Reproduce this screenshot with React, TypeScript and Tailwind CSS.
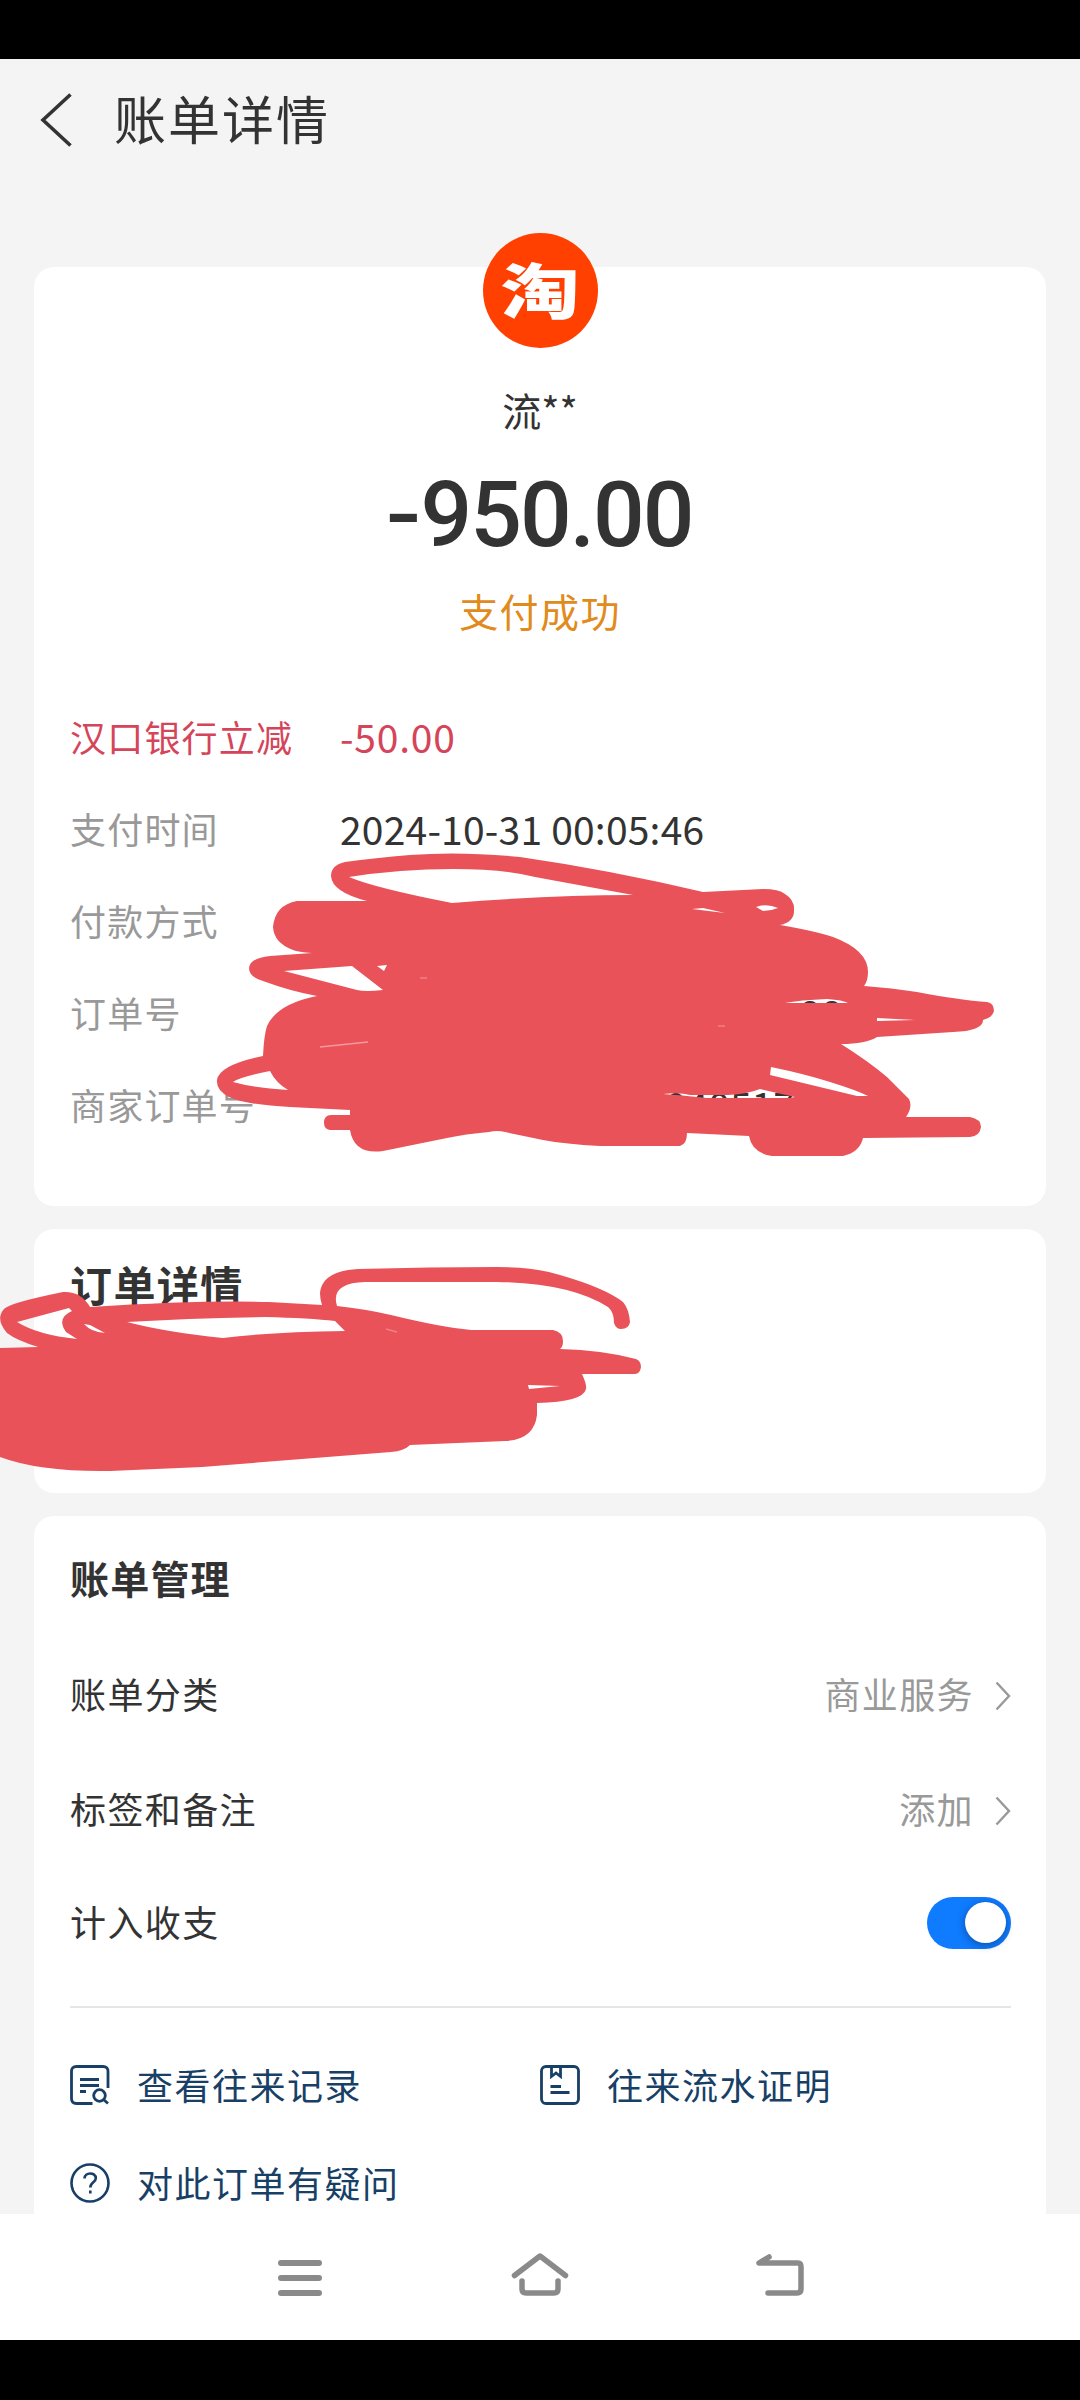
import type { ReactNode } from 'react'

interface DetailRow {
  label: string
  value?: ReactNode
  highlight?: boolean
}

const details: DetailRow[] = [
  { label: '汉口银行立减', value: <span className="tracking-[0.800px]">-50.00</span>, highlight: true },
  { label: '支付时间', value: <span className="tracking-[0.200px]">2024-10-31 00:05:46</span> },
  { label: '付款方式' },
  { label: '订单号', value: <span className="ml-[459px]">88</span> },
  { label: '商家订单号', value: <span className="ml-[325px]">040517</span> },
]

function Chevron() {
  return (
    <svg className="translate-y-[3px]" width="16" height="30" viewBox="0 0 16 30" fill="none" stroke="#999" strokeWidth="2.4">
      <path d="M1.5 1.5 14 15 1.5 28.5" />
    </svg>
  )
}

function RecordIcon() {
  return (
    <svg width="40" height="40" viewBox="0 0 40 40" fill="none" stroke="currentColor" strokeWidth="2.8">
      <path d="M38 23V6.500Q38 1.500 33 1.500H6.500Q1.500 1.500 1.500 6.500V33.500Q1.500 38.500 6.500 38.500H22.500" />
      <path d="M10 14.500H29M10 20.500H29M10 26.500H16" />
      <circle cx="29.500" cy="30.500" r="5.800" />
      <path d="m33.500 34.500 4.500 4" />
    </svg>
  )
}

function ProofIcon() {
  return (
    <svg width="40" height="40" viewBox="0 0 40 40" fill="none" stroke="currentColor" strokeWidth="2.8">
      <rect x="1.500" y="1.500" width="37" height="37" rx="4.500" />
      <path d="M11.500 2V11.500L16 8 20.500 11.500V2" />
      <path d="M10.500 21.500H21M10.500 27.500H29.500" />
    </svg>
  )
}

function HelpIcon() {
  return (
    <svg width="40" height="40" viewBox="0 0 40 40" fill="none" stroke="currentColor" strokeWidth="2.600">
      <circle cx="20" cy="20" r="18.500" />
      <path d="M14.500 15.500C14.500 8.800 25.800 8.800 25.800 15.200C25.800 19.500 20.300 19 20.300 24.500" />
      <path d="M20.300 27.500V30.500" />
    </svg>
  )
}

function ManageRow({ label, children }: { label: string; children: ReactNode }) {
  return (
    <div className="flex items-center justify-between">
      <span className="tracking-[1.4px]">{label}</span>
      {children}
    </div>
  )
}

// Red marker strokes that hide the private fields
function Marker() {
  return (
    <svg className="pointer-events-none absolute inset-0" width="1080" height="2400" viewBox="0 0 1080 2400">
      <g fill="#e95259" fillRule="evenodd">
        <path
          d="M331 876Q331 865 345 862Q375 858 410 855Q460 851 520 857Q610 870 703 892L763 889Q779 889 785 894Q795 900 794 911Q794 922 780 925Q815 931 833 937Q868 950 868 972Q868 981 864 986Q892 988 917 992Q960 1000 987 1002Q994 1003 994 1011Q992 1018 983 1020Q983 1031 953 1032L877 1037Q866 1044 841 1044Q868 1061 887 1077Q902 1092 909 1099Q913 1107 906 1117H970Q981 1119 981 1127Q980 1136 970 1137L863 1138Q860 1152 843 1156H772Q752 1153 749 1136L687 1133Q687 1144 680 1146H600Q565 1144 543 1140L505 1132Q497 1130 489 1132Q465 1134 447 1138L383 1151Q354 1155 350 1130H330Q324 1129 324 1123Q324 1115 331 1115H350V1110L290 1107Q247 1105 229 1097Q216 1090 217 1080Q219 1065 263 1056Q264 1035 267 1026Q277 1004 317 996Q290 991 263 981Q249 977 249 968Q250 958 270 956L312 953Q298 952 293 950Q274 943 273 927Q275 905 297 901H367Q332 892 331 876Z
          M349 877Q400 869 453 869Q503 869 535 877L633 895Q550 895 452 903Q375 888 349 877Z
          M284 971 352 966 383 990Q365 992 357 990Z
          M377 966 387 965 384 971Z
          M233 1082Q240 1077 270 1071Q276 1083 288 1090Q254 1088 233 1082Z
          M756 907Q767 903 778 908Q771 911 763 911Z
          M771 1067Q805 1074 830 1082Q856 1090 868 1096H857L770 1075Z
          M663 1094Q680 1092 690 1095H728Q748 1094 760 1089L777 1093 795 1097 790 1098H707Q680 1095 663 1094Z
          M785 1003Q800 1000 827 999Q843 1000 848 1003Q815 1003 785 1003Z
          M877 1018 915 1020 877 1021Z
          M692 909 703 908 725 913Z"
        />
        <path
          d="M0 1348 38 1347Q16 1340 7 1333Q-5 1319 4 1309Q9 1303 63 1292Q81 1291 90 1307Q200 1300 269 1302L322 1305Q320 1299 320 1293Q322 1271 358 1269Q430 1267 497 1267Q535 1267 560 1275Q605 1288 623 1302Q629 1309 630 1322Q629 1329 621 1329Q616 1329 614 1323Q614 1312 608 1307Q570 1283 497 1282H365Q330 1283 337 1306Q365 1309 391 1315Q440 1327 471 1330H553Q563 1332 563 1341Q563 1347 560 1349Q602 1350 636 1359Q641 1361 641 1367Q640 1374 635 1374H582Q587 1385 586 1389Q583 1402 537 1403V1415Q534 1440 505 1441L410 1445Q404 1451 391 1452L202 1467L110 1471Q40 1472 0 1457Z
          M17 1322 69 1308 72 1311Q56 1318 66 1332L77 1339Q38 1335 17 1322Z
          M127 1322Q190 1318 265 1317Q310 1318 335 1321L345 1331Q270 1332 223 1338Q165 1332 127 1322Z
          M84 1324 90 1325 105 1333Q91 1332 84 1324Z
          M528 1385 560 1386 529 1389Z"
        />
      </g>
      <path d="M320 1047 368 1042" stroke="#f4999c" strokeWidth="1.500" />
      <path d="M420 978H427M718 1026H725M386 1329 397 1332" stroke="#f08086" strokeWidth="1.500" />
    </svg>
  )
}

export default function App() {
  return (
    <div className="relative flex h-[2400px] w-[1080px] flex-col overflow-hidden bg-black pt-[59px] font-['Noto_Sans_CJK_SC',sans-serif] text-[36px] leading-none text-[#333]">
      <div className="flex h-[2155px] shrink-0 flex-col bg-[#f4f4f4] px-[34px]">
        <header className="flex h-[122px] shrink-0 items-center pl-[6px]">
          <svg width="34" height="54" viewBox="0 0 34 54" fill="none" stroke="#333" strokeWidth="3.600">
            <path d="M30.500 1.500 3 27 30.500 52.500" />
          </svg>
          <h1 className="ml-[40px] -mt-[5px] text-[52px] tracking-[2px]">账单详情</h1>
        </header>

        <section className="mt-[86px] flex h-[939px] shrink-0 flex-col items-center rounded-[20px] bg-white">
          <div className="-mt-[34px] flex size-[115px] shrink-0 items-center justify-center rounded-full bg-[#ff4000]">
            <span className="block -translate-y-[3px] scale-x-[1.04] scale-y-[0.8] text-[76px] font-black text-white">淘</span>
          </div>
          <div className="mt-[41px] flex h-[40px] items-center text-[39px]">流**</div>
          <div className="mt-[36px] flex h-[100px] items-center font-['Roboto',sans-serif] text-[91px] font-medium tracking-[-2px]">
            <span className="mr-[4px] inline-block scale-x-[1.15] scale-y-[0.95]">-</span>
            <span>950.00</span>
          </div>
          <div className="mt-[25px] flex h-[40px] items-center text-[39px] tracking-[1.4px] text-[#e08b1b]">支付成功</div>
          <dl className="mt-[60px] w-full px-[36px]">
            {details.map((row) => (
              <div
                key={row.label}
                className={`flex h-[92px] items-center whitespace-nowrap ${row.highlight ? 'text-[#d5455a]' : ''}`}
              >
                <dt className={`w-[270px] tracking-[1.2px] ${row.highlight ? '' : 'text-[#999]'}`}>{row.label}</dt>
                <dd className="text-[39px]">{row.value}</dd>
              </div>
            ))}
          </dl>
        </section>

        <section className="mt-[23px] h-[264px] shrink-0 rounded-[20px] bg-white px-[36px] pt-[34px]">
          <h2 className="text-[42px] font-bold tracking-[1.4px]">订单详情</h2>
        </section>

        <section className="mt-[23px] flex grow flex-col rounded-t-[20px] bg-white pl-[36px] pr-[35px]">
          <h2 className="mt-[42px] text-[39px] font-bold tracking-[1.2px]">账单管理</h2>
          <div className="mt-[38px] grid grid-rows-[115px_115px_111px]">
            <ManageRow label="账单分类">
              <span className="flex items-center gap-[21px] tracking-[1.400px] text-[#999]">
                商业服务
                <Chevron />
              </span>
            </ManageRow>
            <ManageRow label="标签和备注">
              <span className="flex items-center gap-[21px] tracking-[1.400px] text-[#999]">
                添加
                <Chevron />
              </span>
            </ManageRow>
            <ManageRow label="计入收支">
              <span className="mt-[4px] flex h-[52px] w-[84px] items-center justify-end rounded-full bg-[#0f7bff] pr-[5px]">
                <span className="size-[41px] rounded-full bg-white shadow-[0_2px_8px_rgba(0,0,0,0.35)]" />
              </span>
            </ManageRow>
          </div>
          <div className="mt-[30px] h-[2px] bg-[#e6e6e6]" />
          <div className="mt-[57px] grid grid-cols-[470px_1fr] gap-y-[58px] tracking-[1.500px] text-[#183f66]">
            <a className="flex h-[40px] items-center gap-[27px]">
              <RecordIcon />
              <span className="-mt-[2px]">查看往来记录</span>
            </a>
            <a className="flex h-[40px] items-center gap-[27px]">
              <ProofIcon />
              <span className="-mt-[2px]">往来流水证明</span>
            </a>
            <a className="flex h-[40px] items-center gap-[27px]">
              <HelpIcon />
              <span className="-mt-[2px]">对此订单有疑问</span>
            </a>
          </div>
        </section>
      </div>

      <nav className="flex h-[126px] shrink-0 items-center justify-center gap-[180px] bg-white">
        <svg width="60" height="60" viewBox="270 2247 60 60" fill="none" stroke="#8a8a8a" strokeWidth="6" strokeLinecap="round">
          <path d="M281 2263H319M281 2278H319M281 2293H319" />
        </svg>
        <svg width="60" height="60" viewBox="510 2247 60 60" fill="none" stroke="#8a8a8a" strokeWidth="5.500" strokeLinecap="round" strokeLinejoin="round">
          <path d="M514.500 2275.500 540 2256 565.500 2275.500" />
          <path d="M522 2281V2289Q522 2293 526 2293H554Q558 2293 558 2289V2281" />
        </svg>
        <svg width="60" height="60" viewBox="750 2247 60 60" fill="none" stroke="#8a8a8a" strokeWidth="5.500" strokeLinecap="round" strokeLinejoin="round">
          <path d="M769 2257 759 2263H798Q801 2263 801 2267V2289Q801 2293 797 2293H768" />
        </svg>
      </nav>
      <Marker />
    </div>
  )
}
